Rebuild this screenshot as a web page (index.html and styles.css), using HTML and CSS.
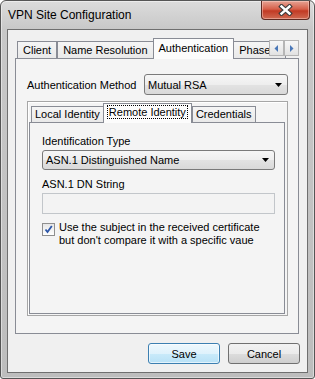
FILE: index.html
```html
<!DOCTYPE html>
<html lang="en">
<head>
    <meta charset="UTF-8" />
    <title>VPN Site Configuration</title>
    <link rel="stylesheet" href="styles.css">
</head>
<body>
<div class="window">
    <div class="titlebar">
        <span class="title">VPN Site Configuration</span>
        <div class="close-btn">
            <svg width="15" height="12" viewBox="0 0 15 12">
                <path d="M3.5 2.5 L11.5 9.5 M11.5 2.5 L3.5 9.5" stroke="#3b3b3b" stroke-width="4.6" stroke-linecap="square" fill="none"/>
                <path d="M3.5 2.5 L11.5 9.5 M11.5 2.5 L3.5 9.5" stroke="#ffffff" stroke-width="2.4" stroke-linecap="square" fill="none"/>
            </svg>
        </div>
    </div>

    <div class="client">
        <div class="tabs">
            <div class="tab">Client</div>
            <div class="tab">Name Resolution</div>
            <div class="tab active">Authentication</div>
            <div class="tab">Phase 1</div>
            <div class="tab-scroll">
                <span class="scroll-btn">
                    <svg width="5" height="7" viewBox="0 0 5 7"><path d="M4 0 L4 7 L0.5 3.5 Z" fill="#4a78b8"/></svg>
                </span>
                <span class="scroll-btn">
                    <svg width="5" height="7" viewBox="0 0 5 7"><path d="M1 0 L1 7 L4.5 3.5 Z" fill="#4a78b8"/></svg>
                </span>
            </div>
        </div>

        <div class="tab-panel">
            <div class="field-row">
                <span>Authentication Method</span>
                <div class="combo combo-method">
                    <span>Mutual RSA</span>
                    <svg width="7" height="4" viewBox="0 0 7 4"><path d="M0 0 H7 L3.5 4 Z" fill="#000"/></svg>
                </div>
            </div>

            <div class="subframe">
                <div class="tabs inner-tabs">
                    <div class="tab">Local Identity</div>
                    <div class="tab active"><span class="focus">Remote Identity</span></div>
                    <div class="tab">Credentials</div>
                </div>
                <div class="inner-panel">
                    <div class="label">Identification Type</div>
                    <div class="combo combo-type">
                        <span>ASN.1 Distinguished Name</span>
                        <svg width="7" height="4" viewBox="0 0 7 4"><path d="M0 0 H7 L3.5 4 Z" fill="#000"/></svg>
                    </div>
                    <div class="label label-gap">ASN.1 DN String</div>
                    <div class="textbox"></div>
                    <div class="check-row">
                        <span class="checkbox">
                            <svg width="11" height="11" viewBox="0 0 11 11">
                                <path d="M2.5 5.5 L4.5 8 L8.8 2" stroke="#2c56a8" stroke-width="1.8" fill="none"/>
                            </svg>
                        </span>
                        <span class="check-text">Use the subject in the received certificate<br>but don't compare it with a specific vaue</span>
                    </div>
                </div>
            </div>
        </div>

        <div class="buttons">
            <button class="btn btn-default">Save</button>
            <button class="btn">Cancel</button>
        </div>
    </div>
</div>
</body>
</html>
```

FILE: styles.css
```css
* {
    box-sizing: border-box;
}

body {
    margin: 0;
    background-color: #ffffff;
    font-family: "Liberation Sans", Arial, sans-serif;
    font-size: 11px;
    color: #000;
}

.window {
    width: 315px;
    height: 379px;
    border: 1px solid #555;
    border-radius: 6px 6px 3px 3px;
    background: linear-gradient(#dcdcdc, #c8c8c8 28px, #bdbdbd);
    box-shadow: inset 0 0 0 1px rgba(255, 255, 255, 0.45);
    padding: 0 6px 5px 6px;
    display: flex;
    flex-direction: column;
}

.titlebar {
    height: 28px;
    display: flex;
    justify-content: space-between;
    align-items: flex-start;
}

.title {
    font-size: 12px;
    line-height: 15px;
    margin: 7px 0 0 1px;
}

.close-btn {
    width: 49px;
    height: 19px;
    margin-right: -2px;
    border: 1px solid #5e2a22;
    border-top: none;
    border-radius: 0 0 4px 4px;
    background: linear-gradient(#e6a394, #d6604a 45%, #c23a24 55%, #d06a52);
    box-shadow: inset 0 0 0 1px rgba(255, 220, 210, 0.45);
    display: flex;
    align-items: center;
    justify-content: center;
}

.client {
    flex: 1;
    background-color: #f0f0f0;
    border: 1px solid #6f6f6f;
    padding: 8px 8px 8px 7px;
    display: flex;
    flex-direction: column;
}

/* tab strips */
.tabs {
    position: relative;
    display: flex;
    align-items: flex-end;
    height: 20px;
    padding-left: 2px;
}

.tab {
    height: 17px;
    border: 1px solid #898c95;
    border-bottom: none;
    padding: 0 5px;
    line-height: 16px;
    white-space: nowrap;
    background: linear-gradient(#f5f5f5, #e9e9e9);
}

.tab.active {
    position: relative;
    z-index: 1;
    height: 21px;
    margin: 0 -1px -1px -1px;
    line-height: 18px;
    background: #fcfcfc;
}

.tab-scroll {
    position: absolute;
    right: 0;
    top: 2px;
    display: flex;
    z-index: 2;
}

.scroll-btn {
    width: 15px;
    height: 16px;
    border: 1px solid #b5b5b5;
    background: linear-gradient(#f7f7f7, #e2e2e2);
    display: flex;
    align-items: center;
    justify-content: center;
}

.tab-panel {
    flex: 1;
    border: 1px solid #898c95;
    background-color: #f4f4f4;
    padding: 15px 10px 17px 11px;
    display: flex;
    flex-direction: column;
}

.field-row {
    display: flex;
    justify-content: space-between;
    align-items: center;
}

.combo {
    height: 21px;
    border: 1px solid #7a7a7a;
    border-radius: 3px;
    background: linear-gradient(#f6f6f6, #eeeeee 50%, #e3e3e3 51%, #d9d9d9);
    display: flex;
    align-items: center;
    justify-content: space-between;
    padding: 0 5px 0 3px;
}

.combo-method {
    width: 144px;
}

.combo-type {
    height: 20px;
    margin-top: 2px;
}

.subframe {
    flex: 1;
    margin-top: 6px;
    border: 1px solid #a6a6a6;
    box-shadow: inset 1px 1px 0 #ffffff;
    padding: 1px 2px 1px 1px;
    display: flex;
    flex-direction: column;
}

.inner-tabs {
    height: 19px;
}

.inner-tabs .tab {
    height: 16px;
    padding: 0 3px;
    line-height: 15px;
}

.inner-tabs .tab.active {
    height: 20px;
    line-height: 17px;
    padding: 0 4px;
    margin-right: 0;
}

.focus {
    outline: 1px dotted #000;
    padding: 0 1px;
}

.inner-panel {
    flex: 1;
    border: 1px solid #898c95;
    background-color: #f4f4f4;
    padding: 12px 9px 0 12px;
}

.label {
    line-height: 13px;
}

.label-gap {
    margin-top: 8px;
}

.textbox {
    height: 21px;
    margin-top: 2px;
    border: 1px solid #c2c6ca;
    background-color: #f3f3f3;
}

.check-row {
    display: flex;
    align-items: flex-start;
    margin-top: 9px;
    gap: 4px;
}

.checkbox {
    width: 13px;
    height: 13px;
    flex-shrink: 0;
    border: 1px solid #8f8f8f;
    background: linear-gradient(#e6e6e6, #ffffff);
    display: flex;
    align-items: center;
    justify-content: center;
}

.check-text {
    line-height: 13px;
    margin-top: -2px;
}

.buttons {
    display: flex;
    justify-content: flex-end;
    gap: 8px;
    margin-top: 9px;
    margin-right: -1px;
}

.btn {
    width: 72px;
    height: 21px;
    border: 1px solid #707070;
    border-radius: 3px;
    background: linear-gradient(#f2f2f2, #ebebeb 50%, #dddddd 51%, #cfcfcf);
    font-family: "Liberation Sans", Arial, sans-serif;
    font-size: 11px;
    color: #000;
    padding: 0;
}

.btn-default {
    border-color: #3c7fb1;
    background: linear-gradient(#eef8fd, #dff2fc 50%, #c9eafa 51%, #b8e1f6);
    box-shadow: inset 0 0 0 1px rgba(255, 255, 255, 0.6);
}
```
